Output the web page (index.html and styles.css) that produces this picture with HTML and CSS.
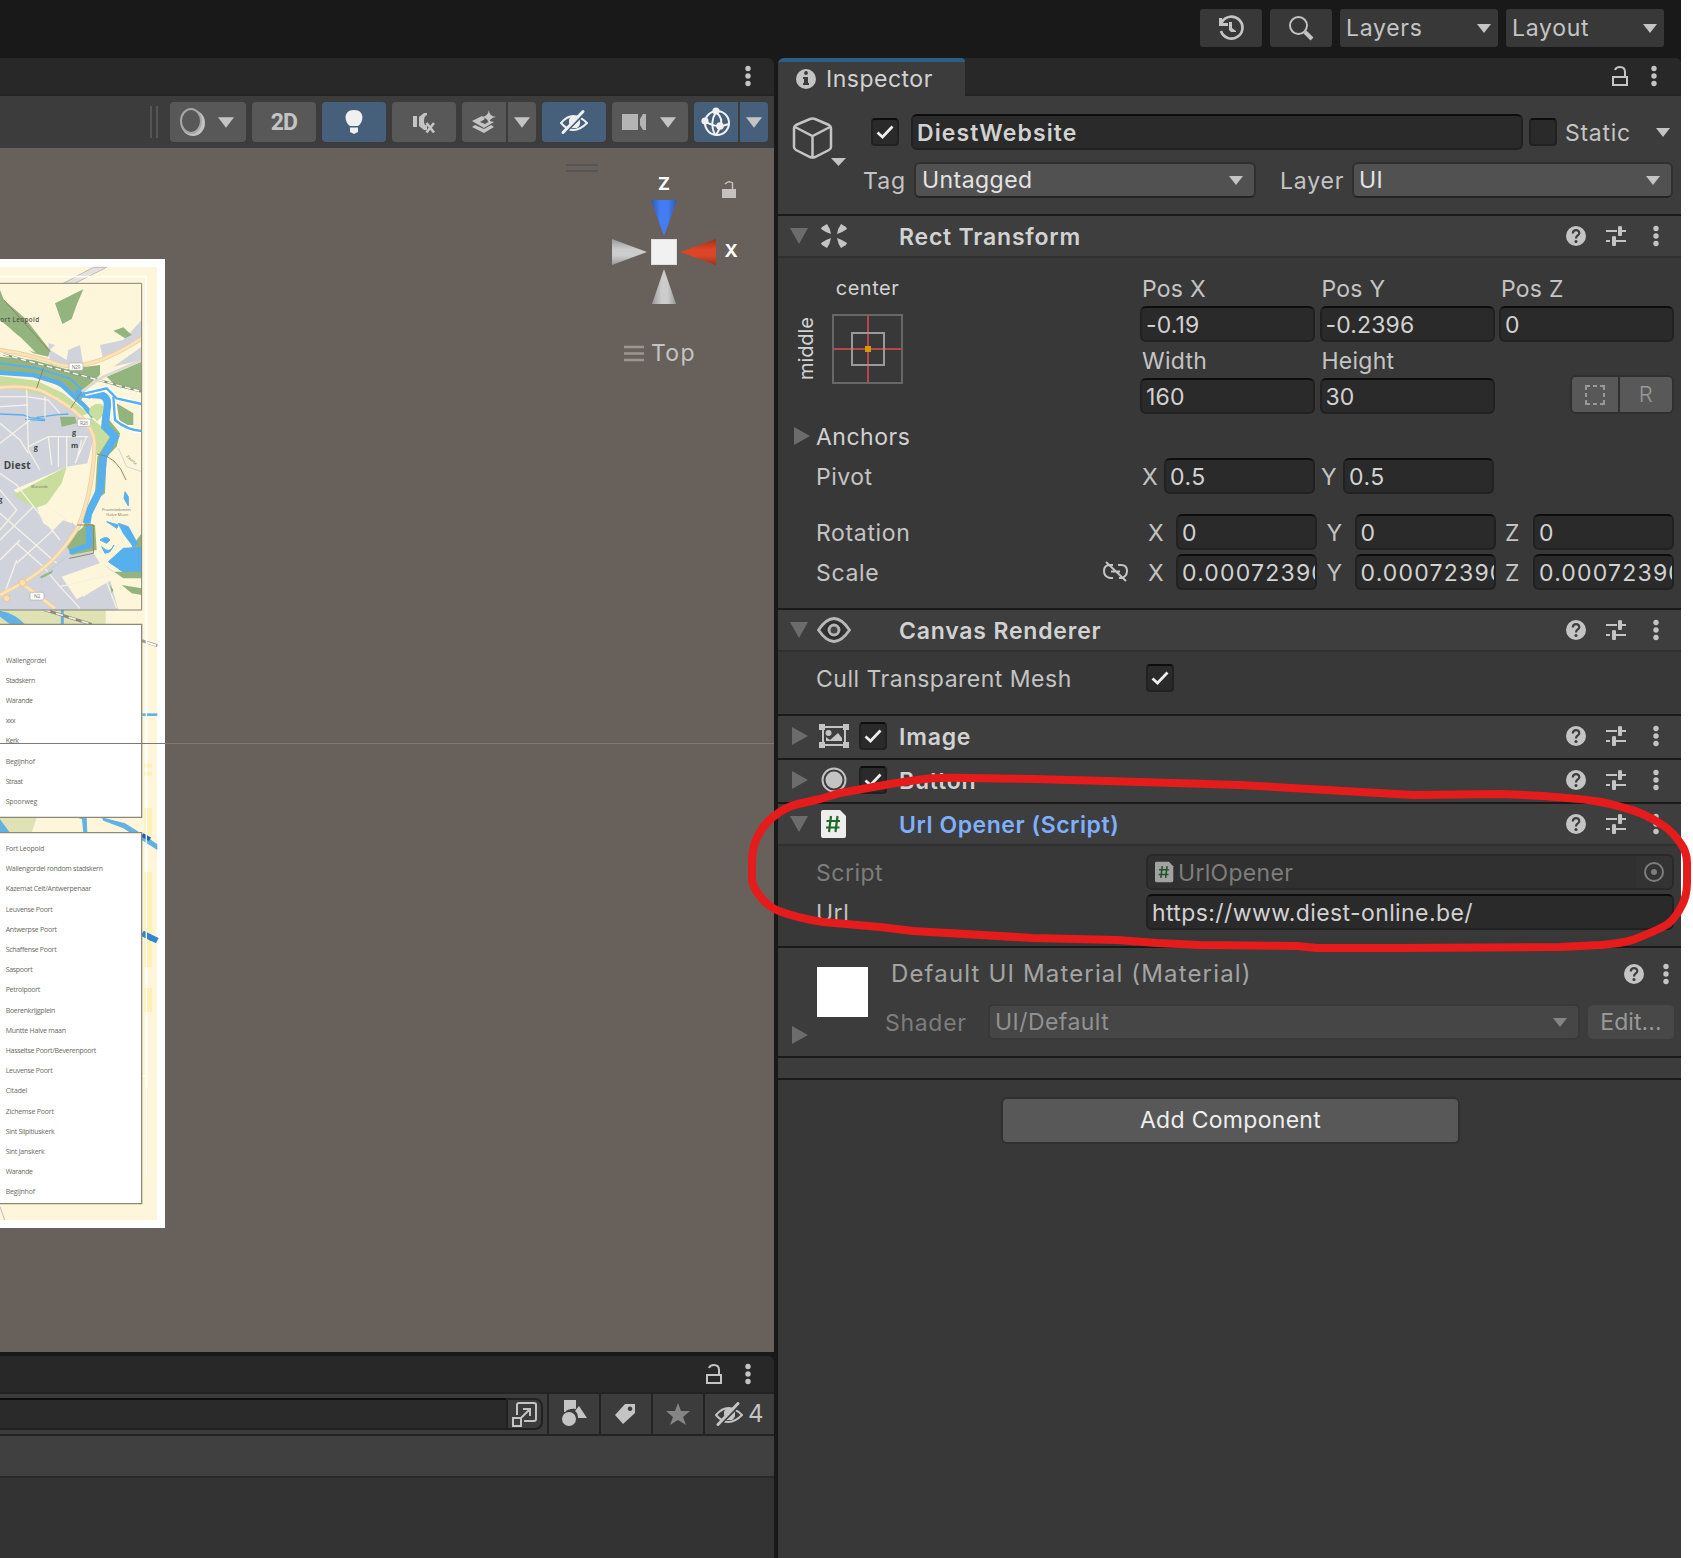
FILE: index.html
```html
<!DOCTYPE html>
<html lang="en">
<head>
<meta charset="utf-8">
<title>DiestWebsite - Inspector</title>
<link rel="stylesheet" href="styles.css">
</head>
<body>
<svg class="defs" aria-hidden="true">
  <symbol id="kebab" viewBox="0 0 6 22"><circle cx="3" cy="3.5" r="2.7"/><circle cx="3" cy="11" r="2.7"/><circle cx="3" cy="18.500" r="2.700"/></symbol>
  <symbol id="caret" viewBox="0 0 14 9"><path d="M0 0H14L7 9Z"/></symbol>
  <symbol id="down" viewBox="0 0 18 16"><path d="M0 0H18L9 16Z"/></symbol>
  <symbol id="right" viewBox="0 0 16 18"><path d="M0 0V18L16 9Z"/></symbol>
  <symbol id="check" viewBox="0 0 18 14"><path d="M1.500 7.500L6.500 12L16.500 1.500" fill="none" stroke="#eee" stroke-width="2.700"/></symbol>
  <symbol id="help" viewBox="0 0 20 20"><circle cx="10" cy="10" r="10"/><path d="M6.800 7.600C6.800 2.800 13.400 3.200 13.300 7.200C13.200 9.500 10 9.500 10 12.400" fill="none" stroke="#3e3e3e" stroke-width="2.200"/><circle cx="10" cy="15.500" r="1.600" fill="#3e3e3e"/></symbol>
  <symbol id="sliders" viewBox="0 0 20 20"><path d="M0 4H11V6H0ZM12 0.500Q14 -.5 16 .5V4H20V6H16V9.500Q14 10.500 12 9.500ZM0 14H4V16H0ZM6 10.500Q8 9.500 10 10.500V14H20V16H10V19.500Q8 20.500 6 19.500Z"/></symbol>
  <symbol id="lock" viewBox="0 0 16 20"><path d="M1 11H15V19H1ZM3 4Q4 1 8 1Q13 1 13 6V11" fill="none" stroke="#c4c4c4" stroke-width="2"/></symbol>
  <symbol id="eyeoff" viewBox="0 0 28 24"><path d="M1 13Q13 -1 27 13Q13 27 1 13Z" fill="none" stroke="currentColor" stroke-width="2"/><path d="M9 13Q8 6 15 6L19 7.500Q22 15 17 18L12 18Z" fill="currentColor"/><path d="M5 23L25 3" stroke="var(--cut)" stroke-width="2"/><path d="M3 22.500L23 1.500" stroke="currentColor" stroke-width="3" stroke-linecap="round"/></symbol>
  <symbol id="script" viewBox="0 0 26 28"><path d="M2 0H19L25 6V26Q25 28 23 28H2Q0 28 0 26V2Q0 0 2 0Z" fill="#eee"/><path d="M10 6L8 22M16.500 6L14.500 22M5.500 11H19M5 17.500H18.500" stroke="#1f6b24" stroke-width="2.200" fill="none"/></symbol>
</svg>

<div class="app">
  <header class="topbar">
    <div class="tb-btn"><svg width="26" height="26" viewBox="0 0 26 26"><path d="M4 7A11 11 0 1 1 3 16" fill="none" stroke="#c4c4c4" stroke-width="2.600"/><path d="M1 3H4L5 8H10V11H1Z"/><path d="M11 7H14V13L18 16V17H13L11 15Z"/></svg></div>
    <div class="tb-btn"><svg width="26" height="26" viewBox="0 0 26 26"><circle cx="10.500" cy="10.500" r="8.500" fill="none" stroke="#c4c4c4" stroke-width="1.900"/><path d="M17 17L24 24" stroke="#c4c4c4" stroke-width="4"/></svg></div>
    <div class="tb-menu"><span>Layers</span><svg width="14" height="9"><use href="#caret"/></svg></div>
    <div class="tb-menu"><span>Layout</span><svg width="14" height="9"><use href="#caret"/></svg></div>
  </header>

  <div class="workspace">
    <div class="left">
      <section class="scene-dock">
        <div class="tabs"><svg class="kebab" width="6" height="22"><use href="#kebab"/></svg></div>
        <div class="scene-tools">
          <i class="grip"></i>
          <div class="tool shade"><svg width="26" height="30" viewBox="0 0 26 30"><ellipse cx="14" cy="16" rx="12" ry="13"/><ellipse cx="12" cy="14" rx="10" ry="12" fill="#585858" stroke="#a6a6a6" stroke-width="2"/></svg><svg width="16" height="11"><use href="#caret"/></svg></div>
          <div class="tool w64"><b class="twod">2D</b></div>
          <div class="tool w64 on"><svg width="18" height="26" viewBox="0 0 18 26"><path d="M9 1C20 1 19 13 13 17H5C-1 13 -2 1 9 1ZM5 18.500H13V23L9 25L5 23Z"/></svg></div>
          <div class="tool w64"><svg width="24" height="24" viewBox="0 0 24 24"><path d="M1 6H5V17H1ZM7 7L12 3H15V5Q12 6 12 11T15 15V20H12L7 16Z"/><path d="M14.500 13L22 22.500M22 13L14.500 22.500" stroke="#c4c4c4" stroke-width="2.600"/></svg></div>
          <div class="split"><div class="tool w44"><svg width="26" height="24" viewBox="0 0 26 24"><path d="M1 11L11 6L14 9L9 12L14 14L19 11L23 12L13 18ZM1 17L4 15L13 19L20 15L23 17L13 23ZM18 0Q18 6 25 7Q18 8 18 14Q17 8 11 7Q17 6 18 0Z"/></svg></div><div class="tool w28"><svg width="16" height="11"><use href="#caret"/></svg></div></div>
          <div class="tool w64 on"><svg class="eye" width="28" height="26"><use href="#eyeoff"/></svg></div>
          <div class="tool camera"><svg width="26" height="18" viewBox="0 0 26 18"><path d="M1 1H17V17H1ZM19 6L22 1H25V17H22L19 12Z" fill="#b4b4b4"/></svg><svg width="16" height="11"><use href="#caret"/></svg></div>
          <div class="split"><div class="tool w44 on"><svg width="30" height="30" viewBox="0 0 30 30"><g fill="none" stroke="#f2f2f2" stroke-width="2"><circle cx="16" cy="16" r="12"/><path d="M15 5Q8 16 14 28M15 5Q23 12 19 19Q18 24 15 28M4 14Q14 22 28 17"/></g><circle cx="15" cy="4" r="3.600"/><circle cx="4" cy="14" r="3.600"/><circle cx="19" cy="19" r="3.800"/></svg></div><div class="tool w28 on"><svg width="16" height="11"><use href="#caret"/></svg></div></div>
        </div>
        <div class="viewport">
          <svg class="scene-art" width="774" height="1204" viewBox="0 148 774 1204">
            <defs>
              <linearGradient id="blue"><stop offset="0" stop-color="#2f59ad"/><stop offset=".35" stop-color="#447cf4"/><stop offset=".65" stop-color="#447cf4"/><stop offset="1" stop-color="#2f59ad"/></linearGradient>
              <linearGradient id="red" x2="0" y2="1"><stop offset="0" stop-color="#9e321b"/><stop offset=".4" stop-color="#dc4526"/><stop offset=".65" stop-color="#dc4526"/><stop offset="1" stop-color="#9e321b"/></linearGradient>
              <linearGradient id="grayh"><stop offset="0" stop-color="#999"/><stop offset=".4" stop-color="#ccc"/><stop offset=".65" stop-color="#ccc"/><stop offset="1" stop-color="#999"/></linearGradient>
              <linearGradient id="grayv" x2="0" y2="1"><stop offset="0" stop-color="#999"/><stop offset=".4" stop-color="#ccc"/><stop offset=".65" stop-color="#ccc"/><stop offset="1" stop-color="#999"/></linearGradient>
              <clipPath id="town"><rect x="0" y="100" width="425" height="980"/></clipPath>
            </defs>
            <rect y="259" width="165" height="969" fill="#fff"/>
            <rect y="267" width="157" height="953" fill="#fdf6da"/>
            <g transform="translate(0 250) scale(.33333)">
              <path d="M190 100L280 52H320L225 100Z" fill="#e4e0dc" stroke="#aaa5a0" stroke-width="2"/>
              <rect y="1080" width="317" height="43" fill="#dfe3b4"/>
              <path d="M0 1082Q45 1090 75 1123H30L0 1100Z" fill="#62b1e2"/>
              <path d="M187 1080V1123" stroke="#62b1e2" stroke-width="9"/>
              <path d="M130 1078L275 1123" stroke="#8b8a80" stroke-width="9"/><path d="M130 1078L275 1123" stroke="#f4efe6" stroke-width="5" stroke-dasharray="22 18"/>
              <g clip-path="url(#town)">
                <rect y="100" width="425" height="980" fill="#fdf6da"/>
                <path d="M0 415L120 420L215 475L282 560L262 640L200 650L40 720L110 770L130 820L160 840L200 800L230 830L300 940L200 980L250 1040L330 990L355 1080H0Z" fill="#d0d3dc"/>
                <path d="M145 280L165 285L150 300L200 330L205 300L240 285L250 345H150ZM300 285L370 270L425 210V260L310 330ZM340 350L425 290V330Z" fill="#d0d3dc"/>
                <path d="M0 120L12 150L75 205L150 300L145 320L100 310L0 240V230L110 310L60 260L0 215Z" fill="#93b47f"/>
                <path d="M0 210L30 235L105 308L60 290L0 250Z" fill="#fdf6da"/>
                <path d="M165 160L250 118L230 165L215 207L187 222ZM340 242L370 232L395 255L375 265ZM320 380L425 335V425L350 410ZM0 320L100 330L200 358L300 345V375L260 410L240 460L200 420L110 375L0 370Z" fill="#93b47f"/>
                <path d="M0 378L110 392L190 430L265 490L240 500L150 440L0 407ZM270 500L340 560L310 615L285 610ZM200 650L40 735L105 775L140 762L185 700ZM275 470Q310 450 315 490L290 515Z" fill="#c9dd9d"/>
                <path d="M350 460L400 490V525H360ZM320 500L360 550L350 590L320 620L315 730L270 760L260 820L285 825L290 900L215 915L195 880L250 830L285 730L292 620L330 560ZM180 500L225 500L230 520L185 530ZM395 890L425 850V910Z" fill="#93b47f"/>
                <path d="M0 368L100 375L180 400L255 470L280 500" fill="none" stroke="#57b0ee" stroke-width="14"/>
                <path d="M0 340L110 355L210 385L270 445" fill="none" stroke="#57b0ee" stroke-width="6"/>
                <path d="M225 430L300 435Q330 440 320 480L315 530L345 560L310 620L300 720L265 790L260 820" fill="none" stroke="#57b0ee" stroke-width="23"/>
                <path d="M270 495Q260 470 290 462Q318 458 308 490L292 512Z" fill="#c9dd9d"/>
                <path d="M255 430L320 415L350 445L425 462M340 440L345 510Q380 540 425 543" fill="none" stroke="#fff" stroke-width="16"/><path d="M255 430L320 415L350 445L425 462M340 440L345 510Q380 540 425 543" fill="none" stroke="#57b0ee" stroke-width="7"/>
                <path d="M260 830H275V890L210 912V900L260 880ZM325 935L370 895L425 892V980H390ZM355 820L385 830L412 880L400 890L370 850ZM320 815L355 825L350 835ZM375 725L385 740V768L372 745ZM300 870Q320 855 330 870L320 880ZM305 890Q330 915 342 885L330 905L315 910Z" fill="#57b0ee" stroke="#57b0ee" stroke-width="3"/>
                <path d="M0 492L70 495L90 503L135 508M110 502L175 494L205 492M75 508L135 512" fill="none" stroke="#57b0ee" stroke-width="4"/>
                <path d="M110 760L205 650L265 655L215 820L160 800L150 820L120 790ZM185 980L300 940L345 985L230 1048Z" fill="#fdf6da"/>
                <path d="M200 650L40 735L105 775L140 762L185 700Z" fill="#c9dd9d"/>
                <g fill="none" stroke="#f6f1e6" stroke-width="4"><path d="M0 440H80L145 450L180 490M80 420L85 600L120 660M0 470L85 465M135 440V500M0 520L60 570L85 610M0 580L90 510M85 590L145 560L265 560M145 560L155 645M175 560V650M200 560V655M260 560L225 640M0 670L50 705L180 870M0 720L50 780L0 840M0 790L170 940M100 770L0 870M160 840L50 940M50 880L130 950L180 1010L240 1075M0 930L60 870M200 810L160 780M320 995L350 1075M180 1010L330 975M50 930L10 1040M245 570L230 630"/></g>
                <path d="M0 300Q100 315 180 345Q270 365 425 265M0 412Q90 405 130 425Q280 500 284 580Q280 720 235 830Q170 940 65 1000L0 1035M65 1000L165 1075" fill="none" stroke="#edcf9f" stroke-width="13"/>
                <path d="M0 300Q100 315 180 345Q270 365 425 265M0 412Q90 405 130 425Q280 500 284 580Q280 720 235 830Q170 940 65 1000L0 1035M65 1000L165 1075" fill="none" stroke="#fbe3b9" stroke-width="8"/>
                <path d="M10 313L425 425" stroke="#8c9b7e" stroke-width="7"/><path d="M10 313L425 425" stroke="#fff" stroke-width="4" stroke-dasharray="17 10"/>
                <path d="M425 330L300 385L245 425" fill="none" stroke="#ddd9d0" stroke-width="8"/>
                <path d="M130 355L110 415M245 425L212 475M12 150L150 305M290 612Q350 615 378 690M232 825H280V910L208 925" fill="none" stroke="#958463" stroke-width="3"/>
                <path d="M355 595L380 650L425 665M200 920Q160 950 120 985" fill="none" stroke="#a9cddc" stroke-width="2"/>
                <path d="M120 980L160 960L155 970L125 985ZM305 940L340 965H425V985H370ZM330 1005L340 1020L335 1030ZM365 1005L425 1015V1035L395 1030Z" fill="#93b47f"/>
                <circle cx="68" cy="998" r="11" fill="#f9dfb4" stroke="#e6c592" stroke-width="3"/><circle cx="20" cy="1045" r="10" fill="#f9dfb4" stroke="#e6c592" stroke-width="3"/>
                <g fill="#fff" stroke="#aaa" stroke-width="2"><rect x="207" y="339" width="42" height="22" rx="5"/><rect x="232" y="507" width="40" height="22" rx="5"/><rect x="90" y="1027" width="42" height="23" rx="5"/></g>
                <g class="road"><text x="215" y="356">N29</text><text x="240" y="524">R26</text><text x="102" y="1044">N2</text></g>
                <text class="fort" x="1" y="217" textLength="117">ort Leopold</text>
                <text class="town" x="11" y="657" textLength="81">Diest</text>
                <g class="poi"><text x="101" y="599">g</text><text x="-5" y="757">g</text><text x="216" y="554">g</text><text x="213" y="593">m</text></g>
                <g class="tiny"><text x="93" y="714">Warande</text><text x="306" y="782" textLength="86">Provinciedomein</text><text x="319" y="797">Halve Maan</text><text x="378" y="620" transform="rotate(42 378 620)">Zwarte</text></g>
              </g>
              <path d="M0 100H425V1080H0" fill="none" stroke="#85827a" stroke-width="3"/>
              <path d="M0 80H438V1870M440 225V2510M0 2478H440" fill="none" stroke="#fff" stroke-width="5"/>
            </g>
            <g transform="translate(0 610) scale(.33333)">
              <path d="M425 92L472 107" stroke="#9e9a92" stroke-width="9"/><path d="M440 97L468 106" stroke="#fff" stroke-width="5"/>
              <path d="M427 314H472" stroke="#62b1e2" stroke-width="8"/><path d="M432 467H456M432 491H456" stroke="#ffefb8" stroke-width="12"/>
              <path d="M432 594H456V690H432ZM432 785H456V1072H432ZM432 1134H456V1206H432Z" fill="#fff0b8"/>
              <path d="M0 622H110L95 668H0Z" fill="#dfe3b4"/><path d="M0 628L30 668H0ZM228 622H260L262 668H250L246 628ZM305 622L375 640Q440 680 472 703V720L425 690L370 655L310 632Z" fill="#62b1e2"/>
              <path d="M427 675L450 688M427 970L456 988" stroke="#1864b8" stroke-width="12"/><path d="M427 970L472 992" stroke="#3186d2" stroke-width="18"/>
              <path d="M439 40V1700" stroke="#fff" stroke-width="4"/>
              <path d="M-5 43H425V622H-5ZM-5 668H425V1781H-5Z" fill="#fff" stroke="#8b8878" stroke-width="4"/>
              <path d="M0 1790L14 1830" stroke="#bbb" stroke-width="3"/>
              <g class="legend">
                <text x="17" y="158" textLength="121">Wallengordel</text><text x="17" y="219" textLength="88">Stadskern</text><text x="17" y="279" textLength="81">Warande</text><text x="17" y="340" textLength="29">xxx</text><text x="17" y="400" textLength="39">Kerk</text><text x="17" y="461" textLength="87">Begijnhof</text><text x="17" y="522" textLength="51">Straat</text><text x="17" y="582" textLength="94">Spoorweg</text>
                <text x="17" y="723" textLength="115">Fort Leopold</text><text x="17" y="784" textLength="291">Wallengordel rondom stadskern</text><text x="17" y="844" textLength="256">Kazemat Celt/Antwerpenaar</text><text x="17" y="905" textLength="140">Leuvense Poort</text><text x="17" y="965" textLength="153">Antwerpse Poort</text><text x="17" y="1026" textLength="152">Schaffense Poort</text><text x="17" y="1087" textLength="80">Saspoort</text><text x="17" y="1147" textLength="103">Petrolpoort</text><text x="17" y="1208" textLength="148">Boerenkrijgplein</text><text x="17" y="1268" textLength="180">Muntte Halve maan</text><text x="17" y="1329" textLength="271">Hasseltse Poort/Beverenpoort</text><text x="17" y="1390" textLength="140">Leuvense Poort</text><text x="17" y="1450" textLength="64">Citadel</text><text x="17" y="1511" textLength="144">Zichemse Poort</text><text x="17" y="1571" textLength="146">Sint Silpitiuskerk</text><text x="17" y="1632" textLength="116">Sint Janskerk</text><text x="17" y="1692" textLength="81">Warande</text><text x="17" y="1753" textLength="87">Begijnhof</text>
              </g>
            </g>
            <path d="M0 743.500H774" stroke="#7f7975"/>
            <path d="M566 165H598M566 171H598" stroke="#555" stroke-width="2"/>
            <path d="M651 200H677L664 236Z" fill="url(#blue)"/><path d="M612 239V265L647 252Z" fill="url(#grayv)"/><path d="M716 239V265L680 252Z" fill="url(#red)"/><path d="M652 304H676L664 269Z" fill="url(#grayh)"/>
            <rect x="651.500" y="239.500" width="25" height="25" fill="#f1f1f1" stroke="#e0dedd"/>
            <g class="axis"><text x="658" y="190">Z</text><text x="724.500" y="257">X</text></g>
            <path d="M722 189H736V198H722Z" fill="#c4c1bf"/><path d="M725 184Q729 180 732.500 183V190" fill="none" stroke="#c4c1bf" stroke-width="1.500"/>
            <path d="M624 347H644M624 353.500H644M624 360H644" stroke="#9b9692" stroke-width="2.500"/>
            <text class="view" x="651" y="361" textLength="44">Top</text>
          </svg>
        </div>
      </section>
      <section class="project">
        <div class="tabs"><svg width="16" height="20"><use href="#lock"/></svg><svg class="kebab" width="6" height="22"><use href="#kebab"/></svg></div>
        <div class="project-tools">
          <div class="search"><span class="query"></span><span class="open"><svg width="26" height="26" viewBox="0 0 26 26"><g fill="none" stroke="#c4c4c4" stroke-width="2"><path d="M5 14V4Q5 2 7 2H22Q24 2 24 4V18Q24 20 22 20H12M1 17H9V25H1ZM9 17L18 8M11 8H18V15"/></g></svg></span></div>
          <div class="cell"><svg width="26" height="28" viewBox="0 0 26 28"><path d="M3 0H15V9Q8 8 4 12H3ZM18 6L26 18H17Q17 13 14 11Z"/><circle cx="8" cy="19" r="7"/></svg></div>
          <div class="cell"><svg class="tagicon" width="22" height="22" viewBox="0 0 22 22"><path fill-rule="evenodd" d="M11 1H21V10L9 21L1 12ZM16 3.500A2.300 2.300 0 1 0 16.100 3.500Z"/></svg></div>
          <div class="cell"><svg width="24" height="23" viewBox="0 0 24 23"><path d="M12 0L15 8H24L17 14L20 22L12 17L4 22L7 14L0 8H9Z" fill="#858585"/></svg></div>
          <div class="cell hidden"><svg width="28" height="24"><use href="#eyeoff"/></svg><span>4</span></div>
        </div>
        <div class="crumbs"></div>
        <div class="files"></div>
      </section>
    </div>

    <aside class="inspector">
      <div class="insp-tabs">
        <div class="tab"><svg width="20" height="20" viewBox="0 0 20 20"><circle cx="10" cy="10" r="10"/><circle cx="10" cy="4" r="1.900" fill="#3c3c3c"/><path d="M7 8H12V14H13V16H7V14H8V10H7Z" fill="#3c3c3c"/></svg><span>Inspector</span></div>
        <svg class="insp-lock" width="16" height="20"><use href="#lock"/></svg><svg class="insp-menu" width="6" height="22"><use href="#kebab"/></svg>
      </div>

      <div class="object">
        <svg class="cube" width="54" height="50" viewBox="0 0 54 50"><path d="M2 11Q2 9 4 8L18 2Q20.500 1 23 2L37 8Q39 9 39 11V30Q39 32 37 33L23 40Q20.500 41 18 40L4 33Q2 32 2 30ZM3 10L20.500 19L38 10M20.500 19V40" fill="none" stroke="#c4c4c4" stroke-width="2.500"/><path d="M39 41H54L46.500 49Z"/></svg>
        <div class="object-rows">
          <div class="name-row"><span class="box"><svg width="18" height="14"><use href="#check"/></svg></span><div class="field name">DiestWebsite</div><span class="box static-box"></span><span class="lbl static">Static</span><svg width="14" height="9"><use href="#caret"/></svg></div>
          <div class="tag-row"><span class="lbl tag">Tag</span><div class="drop tag-drop"><span>Untagged</span><svg width="14" height="9"><use href="#caret"/></svg></div><span class="lbl layer">Layer</span><div class="drop layer-drop"><span>UI</span><svg width="14" height="9"><use href="#caret"/></svg></div></div>
        </div>
      </div>

      <section class="comp">
        <div class="comp-head"><svg class="fold" width="18" height="16"><use href="#down"/></svg><span class="ico"><svg width="26" height="24" viewBox="0 0 26 24"><path d="M1 3L6 0Q9 4 10 10Q4 8 0 5ZM25 3L20 0Q17 4 16 10Q22 8 26 5ZM1 21L6 24Q9 20 10 14Q4 16 0 19ZM25 21L20 24Q17 20 16 14Q22 16 26 19Z"/></svg></span><h2>Rect Transform</h2><span class="acts"><svg width="20" height="20"><use href="#help"/></svg><svg width="20" height="20"><use href="#sliders"/></svg><svg width="6" height="22"><use href="#kebab"/></svg></span></div>
        <div class="rect-body">
          <div class="rect-top">
            <div class="anchor"><span class="middle">middle</span><div class="anchor-col"><span class="center">center</span><svg width="71" height="70" viewBox="0 0 71 70"><path d="M36 2V68M2 35H69" stroke="#b5484a" stroke-width="2"/><rect x="1" y="1" width="69" height="68" fill="none" stroke="#676767" stroke-width="2"/><rect x="20" y="19" width="32" height="32" fill="none" stroke="#999" stroke-width="2"/><rect x="33" y="32" width="6" height="6" fill="#d29b00"/></svg></div></div>
            <div class="pos-grid">
              <span class="lbl">Pos X</span><span class="lbl">Pos Y</span><span class="lbl">Pos Z</span>
              <div class="field">-0.19</div><div class="field">-0.2396</div><div class="field">0</div>
              <span class="lbl">Width</span><span class="lbl">Height</span><span></span>
              <div class="field">160</div><div class="field">30</div><div class="modes"><span><svg width="20" height="20" viewBox="0 0 20 20"><path d="M1 5V1H5M8 1H12M15 1H19V5M19 8V12M19 15V19H15M12 19H8M5 19H1V15M1 12V8" fill="none" stroke="#999" stroke-width="2"/></svg></span><span class="raw">R</span></div>
            </div>
          </div>
          <div class="row anchors"><svg width="16" height="18"><use href="#right"/></svg><span class="lbl bright">Anchors</span></div>
          <div class="row pivot"><span class="lbl name-lbl">Pivot</span><span class="lbl ax">X</span><div class="field">0.5</div><span class="lbl ax second">Y</span><div class="field">0.5</div></div>
          <div class="row vec"><span class="lbl name-lbl">Rotation</span><span class="link"></span><span class="lbl ax">X</span><div class="field">0</div><span class="lbl ax">Y</span><div class="field">0</div><span class="lbl ax">Z</span><div class="field">0</div></div>
          <div class="row vec"><span class="lbl name-lbl">Scale</span><span class="link"><svg width="26" height="22" viewBox="0 0 26 22"><path d="M10 4H7Q1 4 1 10T7 17H10M15 4H18Q24 4 24 10T18 17H16M8 10.500H17M3 1L23 20" fill="none" stroke="#c4c4c4" stroke-width="2"/></svg></span><span class="lbl ax">X</span><div class="field">0.00072390</div><span class="lbl ax">Y</span><div class="field">0.00072390</div><span class="lbl ax">Z</span><div class="field">0.00072390</div></div>
        </div>
      </section>

      <section class="comp">
        <div class="comp-head"><svg class="fold" width="18" height="16"><use href="#down"/></svg><span class="ico"><svg width="34" height="26" viewBox="0 0 34 26"><path d="M1.500 13Q17 -10 32.500 13Q17 36 1.500 13Z" fill="#333" stroke="#b8b8b8" stroke-width="2.800"/><circle cx="17" cy="13" r="8" fill="#282828"/><circle cx="17" cy="13" r="5" fill="#444" stroke="#b4b4b4" stroke-width="3"/></svg></span><h2>Canvas Renderer</h2><span class="acts"><svg width="20" height="20"><use href="#help"/></svg><svg width="20" height="20"><use href="#sliders"/></svg><svg width="6" height="22"><use href="#kebab"/></svg></span></div>
        <div class="cull row"><span class="lbl name-lbl">Cull Transparent Mesh</span><span class="box"><svg width="18" height="14"><use href="#check"/></svg></span></div>
      </section>

      <section class="comp">
        <div class="comp-head closed"><svg class="fold" width="16" height="18"><use href="#right"/></svg><span class="ico"><svg width="30" height="24" viewBox="0 0 30 24"><path d="M4 3H26V21H4Z" fill="none" stroke="#c4c4c4" stroke-width="2"/><path d="M0 0H6V6H0ZM24 0H30V6H24ZM0 18H6V24H0ZM24 18H30V24H24ZM7 17V13L11 16L19 9L23 14V17Z"/><circle cx="9.500" cy="9" r="3"/></svg></span><span class="box"><svg width="18" height="14"><use href="#check"/></svg></span><h2>Image</h2><span class="acts"><svg width="20" height="20"><use href="#help"/></svg><svg width="20" height="20"><use href="#sliders"/></svg><svg width="6" height="22"><use href="#kebab"/></svg></span></div>
      </section>
      <section class="comp">
        <div class="comp-head closed"><svg class="fold" width="16" height="18"><use href="#right"/></svg><span class="ico"><svg width="26" height="26" viewBox="0 0 26 26"><circle cx="13" cy="13" r="11.500" fill="none" stroke="#c4c4c4" stroke-width="2"/><circle cx="13" cy="13" r="8.500"/></svg></span><span class="box"><svg width="18" height="14"><use href="#check"/></svg></span><h2>Button</h2><span class="acts"><svg width="20" height="20"><use href="#help"/></svg><svg width="20" height="20"><use href="#sliders"/></svg><svg width="6" height="22"><use href="#kebab"/></svg></span></div>
      </section>

      <section class="comp">
        <div class="comp-head"><svg class="fold" width="18" height="16"><use href="#down"/></svg><span class="ico"><svg width="26" height="28"><use href="#script"/></svg></span><h2 class="custom">Url Opener (Script)</h2><span class="acts"><svg width="20" height="20"><use href="#help"/></svg><svg width="20" height="20"><use href="#sliders"/></svg><svg width="6" height="22"><use href="#kebab"/></svg></span></div>
        <div class="script-body">
          <div class="row"><span class="lbl name-lbl dim">Script</span><div class="field object-field"><svg class="mini" width="19" height="22"><use href="#script"/></svg><span>UrlOpener</span><i class="pick"><svg width="20" height="20" viewBox="0 0 20 20"><circle cx="10" cy="10" r="9" fill="none" stroke="#7d7d7d" stroke-width="2"/><circle cx="10" cy="10" r="3" fill="#7d7d7d"/></svg></i></div></div>
          <div class="row"><span class="lbl name-lbl">Url</span><div class="field url">https://www.diest-online.be/</div></div>
        </div>
      </section>

      <section class="material">
        <div class="preview"><i class="swatch"></i><svg width="16" height="18"><use href="#right"/></svg></div>
        <div class="mat-main">
          <div class="mat-title"><span class="lbl">Default UI Material (Material)</span><svg width="20" height="20"><use href="#help"/></svg><svg width="6" height="22"><use href="#kebab"/></svg></div>
          <div class="mat-shader"><span class="lbl">Shader</span><div class="drop off"><span>UI/Default</span><svg width="14" height="9"><use href="#caret"/></svg></div><span class="edit">Edit...</span></div>
        </div>
      </section>
      <div class="strip"></div>
      <div class="add-area"><div class="add">Add Component</div></div>
    </aside>
  </div>
</div>
<svg class="annotation" width="1693" height="1558" viewBox="0 0 1693 1558"><path d="M1240 785L1107 781L1033 779L967 778Q935 777 917 780L890 784L840 793L820 799L798 804Q787 806 773 817Q762 826 757 838Q752 848 752 862V880Q753 888 760 896Q768 907 779 911Q797 918 823 922L880 927L913 931L1033 938L1117 940L1157 943L1200 945L1297 946L1317 948H1400L1560 947L1600 945Q1625 943 1635 939Q1663 928 1669 923Q1676 917 1681 907Q1687 897 1687 883V863Q1687 852 1681 844Q1673 832 1664 826Q1645 813 1625 808Q1600 800 1567 798Q1535 795 1500 794L1413 795Z" fill="none" stroke="#e61c1c" stroke-width="8" stroke-linejoin="round"/></svg>
</body>
</html>
```
FILE: styles.css
```css
* { box-sizing: border-box; }
body { margin: 0; width: 1693px; height: 1558px; overflow: hidden; position: relative; background: #fff; color: #d2d2d2; font: 23px/28px Inter, "Liberation Sans", sans-serif; letter-spacing: .5px; }
svg { display: block; flex: none; fill: #c4c4c4; }
.defs { position: absolute; width: 0; height: 0; }
.app { width: 1681px; height: 1558px; background: #191919; display: flex; flex-direction: column; }
.topbar { height: 58px; flex: none; display: flex; justify-content: flex-end; gap: 8px; padding: 9px 17px 11px 0; color: #c4c4c4; }
.tb-btn, .tb-menu { background: #383838; border-radius: 3px; display: flex; align-items: center; }
.tb-btn { width: 62px; justify-content: center; }
.tb-menu { width: 158px; justify-content: space-between; padding: 0 7px 0 6px; }
.tb-menu span { letter-spacing: .7px; }
.workspace { flex: 1; display: flex; gap: 4px; min-height: 0; }
.left { width: 774px; display: flex; flex-direction: column; gap: 4px; }
.scene-dock { height: 1294px; }
.tabs { height: 38px; background: #282828; border-bottom: 2px solid #232323; border-radius: 0 6px 0 0; display: flex; justify-content: flex-end; align-items: center; padding-right: 23px; }
.scene-tools { height: 52px; background: #3c3c3c; display: flex; align-items: center; gap: 6px; padding-right: 6px; justify-content: flex-end; }
.grip { width: 8px; height: 32px; border: solid #555; border-width: 0 2px; margin-right: 6px; }
.tool { height: 40px; background: #585858; border-radius: 4px; display: flex; align-items: center; justify-content: center; }
.w64 { width: 64px; } .w44 { width: 44px; } .w28 { width: 28px; }
.shade, .camera { width: 76px; gap: 13px; padding-right: 4px; }
.camera { gap: 13px; }
.on { background: #46607c; } .on svg { fill: #f0f0f0; }
.on svg.eye { color: #f0f0f0; --cut: #46607c; }
.on.w28 svg { fill: #c4c4c4; }
.split { display: flex; gap: 2px; }
.split .w44 { border-radius: 4px 0 0 4px; } .split .w28 { border-radius: 0 4px 4px 0; }
.twod { font: bold 23px/28px "Roboto", sans-serif; letter-spacing: -.8px; color: #c4c4c4; padding-top: 1px; }
.viewport { height: 1204px; background: #68605b; }
.legend text { font: 400 21px "Open Sans", sans-serif; fill: #6b6965; letter-spacing: -1px; }
.town { font: bold 30px "Open Sans", sans-serif; fill: #444; }
.fort { font: 600 19px "Open Sans", sans-serif; fill: #54544e; }
.road text { font: 15px "Open Sans", sans-serif; fill: #777; letter-spacing: -1px; }
.poi text { font: bold 22px "Open Sans", sans-serif; fill: #444; }
.tiny text { font: 12px "Open Sans", sans-serif; fill: #777; letter-spacing: 0; }
.axis text { font: bold 18px Inter, sans-serif; fill: #fff; letter-spacing: 0; }
.view { fill: #c4c4c4; font-size: 23px; }
.project { flex: 1; display: flex; flex-direction: column; }
.project .tabs { flex: none; gap: 23px; }
.project-tools { height: 42px; background: #3c3c3c; border-bottom: 2px solid #232323; display: flex; }
.search { width: 549px; border-right: 2px solid #232323; padding: 4px 4px 4px 0; display: flex; }
.query { flex: 1; background: #2a2a2a; border-top: 2px solid #0d0d0d; border-bottom: 2px solid #212121; }
.open { width: 37px; border: 2px solid #212121; border-radius: 0 8px 8px 0; display: flex; align-items: center; justify-content: center; }
.cell { width: 52px; border-right: 2px solid #232323; display: flex; align-items: center; justify-content: center; }
.tagicon { margin-right: 3px; }
.hidden { width: 69px; border: 0; gap: 5px; padding-left: 0; font-size: 24px; color: #c4c4c4; --cut: #3c3c3c; }
.crumbs { height: 42px; background: #404040; border-bottom: 2px solid #292929; }
.files { flex: 1; background: #333; }

.inspector { width: 903px; background: #383838; border-radius: 6px 6px 0 0; overflow: hidden; }
.insp-tabs { height: 38px; background: #282828; display: flex; align-items: center; padding-right: 24px; box-shadow: inset 0 -2px #232323; }
.tab { width: 187px; height: 38px; background: #3c3c3c; border-top: 4px solid #2c5d87; border-radius: 5px 4px 0 0; display: flex; align-items: center; gap: 10px; padding-left: 18px; }
.insp-lock { margin: 0 23px 2px auto; }
.insp-menu { margin-bottom: 2px; }
.object { height: 120px; background: #3c3c3c; border-bottom: 2px solid #1a1a1a; display: flex; padding: 18px 7px 0 14px; }
.cube { margin-top: 3px; }
.object-rows { flex: 1; display: flex; flex-direction: column; gap: 12px; padding-left: 17px; }
.name-row, .tag-row { display: flex; align-items: center; height: 36px; }
.name-row { padding: 0 4px 0 8px; }
.name-row > svg { margin-left: auto; }
.box { width: 28px; height: 28px; flex: none; border: 2px solid #212121; border-top-color: #0d0d0d; border-radius: 4px; background: #2a2a2a; display: flex; align-items: center; justify-content: center; }
.field { height: 36px; background: #2a2a2a; border: 2px solid #212121; border-top-color: #0d0d0d; border-radius: 6px; padding: 3px 4px 0; overflow: hidden; white-space: nowrap; letter-spacing: .15px; }
.name { width: 612px; margin-left: 12px; font-weight: 600; letter-spacing: 1.1px; }
.static-box { margin: 0 8px 0 6px; }
.static { padding-top: 1px; letter-spacing: .7px; }
.lbl { color: #c4c4c4; white-space: nowrap; }
.tag { width: 51px; padding-top: 1px; letter-spacing: 1px; }
.layer { margin-left: 24px; width: 72px; padding-top: 1px; letter-spacing: .8px; }
.drop { height: 36px; background: #515151; border: 2px solid #303030; border-bottom-color: #242424; border-radius: 6px; display: flex; align-items: center; justify-content: space-between; padding: 0 11px 0 6px; color: #e4e4e4; letter-spacing: .45px; }
.tag-drop { width: 342px; } .layer-drop { width: 321px; padding-left: 5px; }

.comp { border-bottom: 2px solid #1a1a1a; }
.comp-head { height: 42px; background: #3e3e3e; border-bottom: 2px solid #303030; display: flex; align-items: center; padding: 0 22px 0 12px; }
.comp-head.closed { border-bottom: 0; padding-bottom: 2px; }
.fold, .anchors svg, .preview svg { fill: #6c6c6c; }
.fold { width: 18px; }
.closed .fold { margin: 0 0 0 2px; width: 16px; }
.ico { width: 34px; margin: 0 8px 0 9px; display: flex; justify-content: center; }
.comp-head .ico + h2 { margin-left: 40px; }
.closed .ico { margin-right: 8px; }
.closed h2 { margin-left: 12px; }
h2 { margin: 0; padding-top: 1px; font-size: 23px; line-height: 28px; font-weight: 600; letter-spacing: .8px; }
h2.custom { color: #7fb0ff; letter-spacing: .55px; }
.acts { margin-left: auto; display: flex; align-items: center; gap: 20px; }
.acts svg:last-child { margin-left: 7px; }
.rect-body { height: 350px; padding: 16px 7px 0 16px; }
.rect-top { display: flex; justify-content: space-between; height: 140px; }
.anchor { display: flex; gap: 12px; margin-left: -2px; font-size: 20px; color: #d2d2d2; }
.middle { writing-mode: vertical-rl; transform: rotate(180deg); width: 28px; height: 70px; margin-top: 40px; text-align: center; letter-spacing: -.1px; }
.anchor-col { display: flex; flex-direction: column; align-items: center; gap: 12px; }
.pos-grid { display: grid; grid-template-columns: 175px 175px 175px; column-gap: 4.500px; grid-template-rows: 32px 36px 36px 36px; }
.pos-grid .lbl { padding: 1px 0 0 2px; letter-spacing: .25px; }
.pos-grid .lbl:nth-of-type(n+4) { padding-top: 5px; }
.modes { justify-self: end; width: 104px; height: 39px; margin-top: -3px; display: flex; border: 2px solid #303030; border-radius: 6px; background: #585858; overflow: hidden; }
.modes span { width: 46px; display: flex; justify-content: center; align-items: center; color: #999; }
.modes .raw { flex: 1; border-left: 2px solid #303030; font-size: 22px; font-weight: 300; padding-bottom: 1px; }
.row { display: flex; align-items: center; }
.row > .lbl { padding-top: 1px; }
.anchors { height: 44px; gap: 6px; }
.bright { color: #d2d2d2; }
.name-lbl { padding-left: 22px; }
.pivot { height: 36px; margin-bottom: 20px; }
.pivot .name-lbl { width: 348px; } .pivot .ax { width: 22px; } .pivot .second { width: 22px; margin-left: 6px; }
.pivot .field { width: 151px; letter-spacing: .5px; }
.vec { margin-bottom: 4px; }
.vec .name-lbl { width: 309px; letter-spacing: .65px; } .link { width: 45px; }
.vec .ax { width: 28px; } .vec .field { width: 141px; margin-right: 9.500px; flex: none; letter-spacing: 1.2px; }
.vec .field:last-child { margin: 0; }
.cull { height: 62px; padding: 0 0 10px 16px; }
.cull .name-lbl { width: 352px; }
.script-body { height: 100px; padding: 8px 7px 0 16px; display: flex; flex-direction: column; gap: 4px; }
.script-body .name-lbl { width: 352px; }
.script-body .field { flex: 1; }
.script-body .url { letter-spacing: .4px; }
.dim { color: #7d7d7d; }
.object-field { background: #303030; border-color: #292929; color: #7d7d7d; display: flex; align-items: center; padding: 0 0 0 7px; gap: 4px; letter-spacing: .3px; }
.object-field span { padding-top: 2px; }
.mini { opacity: .6; }
.pick { margin-left: auto; width: 36px; height: 32px; background: #333; display: flex; align-items: center; justify-content: center; }
.material { height: 110px; background: #3c3c3c; border-bottom: 2px solid #1a1a1a; display: flex; padding: 8px 7px 0 14px; }
.preview { width: 93px; padding-top: 11px; }
.swatch { display: block; width: 51px; height: 50px; margin: 0 0 9px 25px; background: #fff; }
.mat-main { flex: 1; }
.mat-title { display: flex; align-items: center; height: 36px; gap: 19px; padding: 0 5px 0 6px; }
.mat-title .lbl { margin-right: auto; color: #a4a4a4; font-size: 24px; letter-spacing: 1.15px; }
.mat-shader { display: flex; align-items: center; margin-top: 12px; }
.mat-shader .lbl { width: 103px; color: #7d7d7d; padding-top: 1px; letter-spacing: .7px; }
.off { width: 592px; height: 36px; background: #464646; border-color: #383838; color: #919191; padding-left: 5px; }
.off svg { fill: #858585; }
.edit { width: 86px; height: 34px; margin-left: auto; border-radius: 5px; background: #484848; color: #999; text-align: center; line-height: 34px; letter-spacing: .1px; }
.strip { height: 22px; background: #3c3c3c; border-bottom: 2px solid #1a1a1a; }
.add-area { padding-top: 17px; }
.add { width: 459px; height: 47px; margin-left: 223px; background: #585858; border: 2px solid #303030; border-radius: 6px; text-align: center; line-height: 42px; color: #eee; letter-spacing: .3px; }
.annotation { position: absolute; left: 0; top: 0; }
```
